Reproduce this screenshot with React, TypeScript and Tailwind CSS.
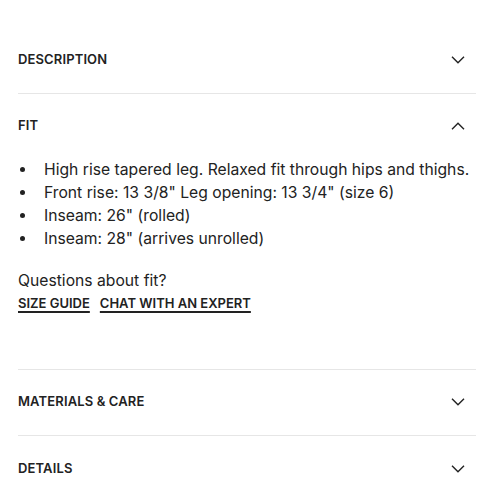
import React from "react";

const font = { fontFamily: "Inter, 'Liberation Sans', sans-serif" };

function Chevron({ up }: { up?: boolean }) {
  return (
    <svg width="14" height="8" viewBox="0 0 14 8" fill="none" className="mr-[11px]">
      {up ? (
        <path d="M1 7.2L7 1.2L13 7.2" stroke="#222" strokeWidth="1.4" />
      ) : (
        <path d="M1 0.8L7 6.8L13 0.8" stroke="#222" strokeWidth="1.4" />
      )}
    </svg>
  );
}

function Header({ title, up }: { title: string; up?: boolean }) {
  return (
    <div className="flex h-[66px] items-center justify-between">
      <span className="text-[13px] font-semibold tracking-[0.01em] text-[#222]">{title}</span>
      <Chevron up={up} />
    </div>
  );
}

export default function App() {
  const items = [
    "High rise tapered leg. Relaxed fit through hips and thighs.",
    'Front rise: 13 3/8" Leg opening: 13 3/4" (size 6)',
    'Inseam: 26" (rolled)',
    'Inseam: 28" (arrives unrolled)',
  ];
  return (
    <div className="h-[495px] w-[495px] overflow-hidden bg-white pl-[18px] pr-[19px] pt-[27px]" style={font}>
      <div className="border-b border-[#e6e6e6]">
        <Header title="DESCRIPTION" />
      </div>
      <div className="-mt-[1px] border-b border-[#e6e6e6] pb-[56px]">
        <Header title="FIT" up />
        <ul className="-mt-[1px] text-[15.7px] leading-[23px] text-[#222]">
          {items.map((t) => (
            <li key={t} className="flex items-center whitespace-nowrap">
              <span className="ml-[2px] mr-[19px] h-[5px] w-[5px] shrink-0 rounded-full bg-[#222]" />
              <span>{t}</span>
            </li>
          ))}
        </ul>
        <p className="mt-[19px] text-[15.7px] leading-[24px] text-[#222]">Questions about fit?</p>
        <div className="flex gap-[10px] text-[13px] font-semibold leading-[20px] text-[#222]">
          <a className="underline decoration-[1.5px] underline-offset-[3px]">SIZE GUIDE</a>
          <a className="underline decoration-[1.5px] underline-offset-[3px]">CHAT WITH AN EXPERT</a>
        </div>
      </div>
      <div className="-mt-[1px] border-b border-[#e6e6e6]">
        <Header title="MATERIALS & CARE" />
      </div>
      <div>
        <Header title="DETAILS" />
      </div>
    </div>
  );
}
